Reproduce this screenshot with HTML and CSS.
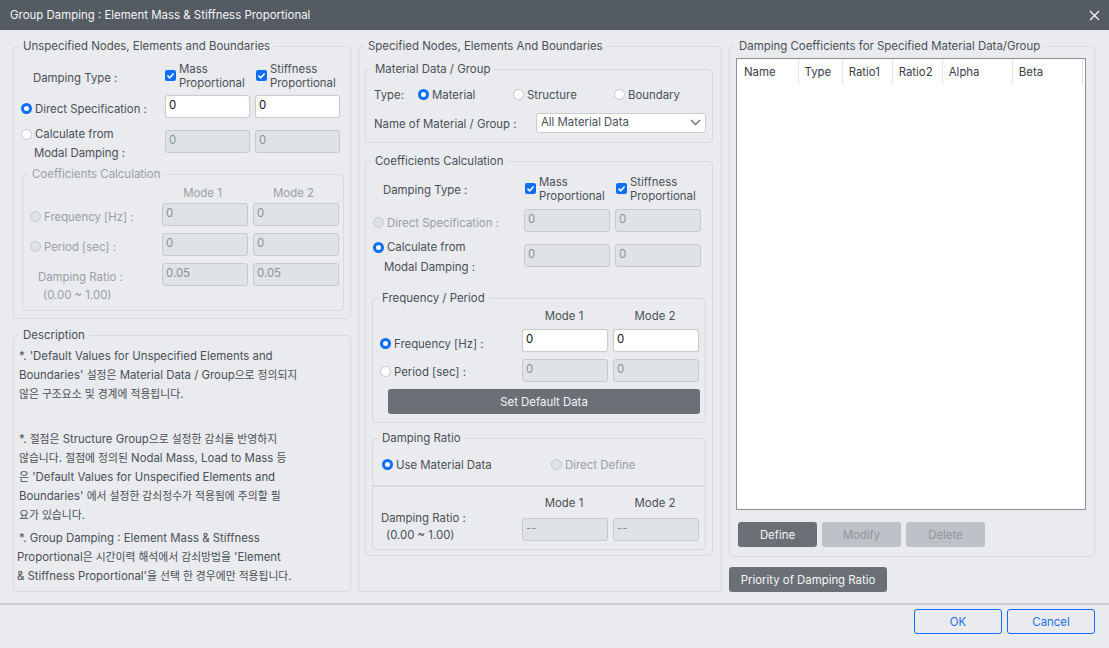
FILE: index.html
```html
<!DOCTYPE html>
<html lang="ko">
<head>
<meta charset="utf-8">
<title>Group Damping</title>
<link rel="stylesheet" href="styles.css">
</head>
<body>
<div class="dialog">
  <header class="titlebar">
    <span>Group Damping : Element Mass &amp; Stiffness Proportional</span>
    <svg class="close" width="11" height="11" viewBox="0 0 11 11"><path d="M1 1l9 9M10 1l-9 9" stroke="#fff" stroke-width="1.2" fill="none"/></svg>
  </header>
  <main class="content">
    <section class="col-left">
      <fieldset class="group unspecified">
        <legend>Unspecified Nodes, Elements and Boundaries</legend>
        <div class="row row-type">
          <div class="type-label">Damping Type :</div>
          <label class="check"><span class="box"><svg width="11" height="11" viewBox="0 0 11 11"><path d="M2.5 5.6l2.2 2.2 3.9-4.4" stroke="#fff" stroke-width="1.5" fill="none"/></svg></span><span>Mass<br>Proportional</span></label>
          <label class="check"><span class="box"><svg width="11" height="11" viewBox="0 0 11 11"><path d="M2.5 5.6l2.2 2.2 3.9-4.4" stroke="#fff" stroke-width="1.5" fill="none"/></svg></span><span>Stiffness<br>Proportional</span></label>
        </div>
        <div class="row row-direct">
          <label class="opt"><input type="radio" name="a" checked>Direct Specification :</label>
          <input class="field" type="text" value="0">
          <input class="field" type="text" value="0">
        </div>
        <div class="row row-calc">
          <div class="two-line"><label class="opt"><input type="radio" name="a">Calculate from</label><div class="second">Modal Damping :</div></div>
          <input class="field" type="text" value="0" disabled>
          <input class="field" type="text" value="0" disabled>
        </div>
        <fieldset class="group inner-coef muted">
          <legend>Coefficients Calculation</legend>
          <div class="nrow modes"><div></div><div>Mode 1</div><div>Mode 2</div></div>
          <div class="nrow fr">
            <label class="opt"><input type="radio" name="b" disabled>Frequency [Hz] :</label>
            <input class="field" type="text" value="0" disabled>
            <input class="field" type="text" value="0" disabled>
          </div>
          <div class="nrow fr">
            <label class="opt"><input type="radio" name="b" disabled>Period [sec] :</label>
            <input class="field" type="text" value="0" disabled>
            <input class="field" type="text" value="0" disabled>
          </div>
          <div class="nrow fr">
            <div class="ratio-label">Damping Ratio :<br><span class="range">(0.00 ~ 1.00)</span></div>
            <input class="field" type="text" value="0.05" disabled>
            <input class="field" type="text" value="0.05" disabled>
          </div>
        </fieldset>
      </fieldset>
      <fieldset class="group description">
        <legend>Description</legend>
        <p class="p1">*. 'Default Values for Unspecified Elements and<br>Boundaries' <span class="ko">설정은</span> Material Data / Group<span class="ko">으로 정의되지</span><br><span class="ko">않은 구조요소 및 경계에 적용됩니다</span>.</p>
        <p class="p2">*. <span class="ko">절점은</span> Structure Group<span class="ko">으로 설정한 감쇠를 반영하지</span><br><span class="ko">않습니다</span>. <span class="ko">절점에 정의된</span> Nodal Mass, Load to Mass <span class="ko">등</span><br><span class="ko">은</span> 'Default Values for Unspecified Elements and<br>Boundaries' <span class="ko">에서 설정한 감쇠정수가 적용됨에 주의할 필</span><br><span class="ko">요가 있습니다</span>.</p>
        <p class="p3"><span class="indent">*. Group Damping : Element Mass &amp; Stiffness</span><br>Proportional<span class="ko">은 시간이력 해석에서 감쇠방법을</span> 'Element<br>&amp; Stiffness Proportional'<span class="ko">을 선택 한 경우에만 적용됩니다</span>.</p>
      </fieldset>
    </section>

    <fieldset class="group col-mid">
      <legend>Specified Nodes, Elements And Boundaries</legend>
      <fieldset class="group material">
        <legend>Material Data / Group</legend>
        <div class="type-row">
          <span class="type-name">Type:</span>
          <label class="opt t1"><input type="radio" name="c" checked>Material</label>
          <label class="opt t2"><input type="radio" name="c">Structure</label>
          <label class="opt t3"><input type="radio" name="c">Boundary</label>
        </div>
        <div class="name-row">
          <span>Name of Material / Group :</span>
          <div class="select"><span>All Material Data</span><svg width="11" height="7" viewBox="0 0 11 7"><path d="M1 1l4.5 4.5L10 1" stroke="#6f757b" stroke-width="1.5" fill="none"/></svg></div>
        </div>
      </fieldset>
      <fieldset class="group coef">
        <legend>Coefficients Calculation</legend>
        <div class="mrow row-type">
          <div class="type-label">Damping Type :</div>
          <label class="check"><span class="box"><svg width="11" height="11" viewBox="0 0 11 11"><path d="M2.5 5.6l2.2 2.2 3.9-4.4" stroke="#fff" stroke-width="1.5" fill="none"/></svg></span><span>Mass<br>Proportional</span></label>
          <label class="check"><span class="box"><svg width="11" height="11" viewBox="0 0 11 11"><path d="M2.5 5.6l2.2 2.2 3.9-4.4" stroke="#fff" stroke-width="1.5" fill="none"/></svg></span><span>Stiffness<br>Proportional</span></label>
        </div>
        <div class="mrow m-direct">
          <label class="opt dim"><input type="radio" name="d" disabled>Direct Specification :</label>
          <input class="field" type="text" value="0" disabled>
          <input class="field" type="text" value="0" disabled>
        </div>
        <div class="mrow m-calc">
          <div class="two-line"><label class="opt"><input type="radio" name="d" checked>Calculate from</label><div class="second">Modal Damping :</div></div>
          <input class="field" type="text" value="0" disabled>
          <input class="field" type="text" value="0" disabled>
        </div>
        <fieldset class="group freq">
          <legend>Frequency / Period</legend>
          <div class="frow modes"><div></div><div>Mode 1</div><div>Mode 2</div></div>
          <div class="frow f1">
            <label class="opt"><input type="radio" name="e" checked>Frequency [Hz] :</label>
            <input class="field" type="text" value="0">
            <input class="field" type="text" value="0">
          </div>
          <div class="frow f2">
            <label class="opt"><input type="radio" name="e">Period [sec] :</label>
            <input class="field" type="text" value="0" disabled>
            <input class="field" type="text" value="0" disabled>
          </div>
          <button class="btn set-default" type="button">Set Default Data</button>
        </fieldset>
        <fieldset class="group ratio">
          <legend>Damping Ratio</legend>
          <div class="ratio-top">
            <label class="opt"><input type="radio" name="f" checked>Use Material Data</label>
            <label class="opt dim"><input type="radio" name="f" disabled>Direct Define</label>
          </div>
          <div class="ratio-bottom">
            <div class="frow modes"><div></div><div>Mode 1</div><div>Mode 2</div></div>
            <div class="frow rr">
              <div class="ratio-label">Damping Ratio :<br><span class="range">(0.00 ~ 1.00)</span></div>
              <input class="field" type="text" value="--" disabled>
              <input class="field" type="text" value="--" disabled>
            </div>
          </div>
        </fieldset>
      </fieldset>
    </fieldset>

    <section class="col-right">
      <fieldset class="group coefficients">
        <legend>Damping Coefficients for Specified Material Data/Group</legend>
        <div class="table-box">
          <table>
            <colgroup><col class="c1"><col class="c2"><col class="c3"><col class="c4"><col class="c5"><col class="c6"></colgroup>
            <thead><tr><th>Name</th><th>Type</th><th>Ratio1</th><th>Ratio2</th><th>Alpha</th><th>Beta</th></tr></thead>
          </table>
        </div>
        <div class="table-actions">
          <button class="btn" type="button">Define</button>
          <button class="btn off" type="button">Modify</button>
          <button class="btn off" type="button">Delete</button>
        </div>
      </fieldset>
      <button class="btn priority" type="button">Priority of Damping Ratio</button>
    </section>
  </main>
  <footer class="footer">
    <button class="btn-line" type="button">OK</button>
    <button class="btn-line" type="button">Cancel</button>
  </footer>
</div>
</body>
</html>
```
FILE: styles.css
```css
* { box-sizing: border-box; }
html, body { margin: 0; height: 100%; }
body { background: #e9ebee; font-family: Inter, "Noto Sans CJK KR", sans-serif; font-size: 11.4px; color: #4b5058; line-height: 14px; overflow: hidden; }
.dialog { width: 1109px; height: 648px; display: flex; flex-direction: column; }

.titlebar { height: 30px; flex: none; background: #555b63; color: #f4f5f6; font-size: 11.45px; display: flex; align-items: center; justify-content: space-between; padding: 0 9px 0 10px; }
.close { display: block; }

.content { height: 573px; flex: none; display: flex; padding-top: 9px; padding-left: 13px; }
.footer { flex: 1; border-top: 2px solid #ccced3; display: flex; justify-content: flex-end; gap: 5px; padding: 4px 14px 0 0; }

fieldset.group { margin: 0; padding: 0; min-width: 0; border: 1px solid #d8dade; border-radius: 4px; }
legend { padding: 0 4px; margin-left: 5px; line-height: 14px; height: 14px; font-size: 11.45px; }

.col-left { width: 338px; flex: none; }
fieldset.unspecified { height: 280px; }
fieldset.description { height: 264px; margin-top: 9px; }
.description p { margin: 0; line-height: 19.2px; font-size: 11.4px; }
.ko { font-size: 10.8px; }
.p1 { padding: 5px 0 0 5px; }
.p2 { padding: 25px 0 0 5px; }
.p3 { padding: 3px 0 0 3px; }
.indent { padding-left: 2px; }

.row { display: grid; grid-template-columns: 146px 85px 85px; column-gap: 5px; }
.row-type { height: 28px; margin-top: 9px; align-items: center; }
.type-label { padding-left: 19px; padding-top: 2px; }
.row .type-label { padding-top: 4px; }
.check { display: flex; align-items: center; white-space: nowrap; gap: 3px; }
.row .check:last-child { padding-left: 1px; }
.mrow .check { padding-left: 1px; }
.box { width: 11px; height: 11px; background: #0d6efd; border-radius: 2px; display: block; flex: none; margin-top: -2px; }
.box svg { display: block; }

.row-direct { margin-top: 5px; height: 23px; }
.row-calc { margin-top: 6px; height: 38px; }
.row-calc .field { margin-top: 6px; }
.opt { display: flex; align-items: center; white-space: nowrap; height: 23px; gap: 3px; }
.row .opt { padding-left: 7px; }
.row-direct .opt, .m-direct .opt, .fr .opt { height: 27px; }
.f1 .opt { height: 29px; }
.f2 .opt { height: 25px; }
.two-line { line-height: 19px; }
.two-line .opt { height: 19px; }
.row .two-line { padding-top: 1px; }
.row .second { padding-left: 20px; }

input[type=radio] { appearance: none; margin: 0; width: 11px; height: 11px; border-radius: 50%; background: #fff; border: 1px solid #c4c7cc; flex: none; }
input[type=radio]:checked { background: #fff; border: 3px solid #0d6efd; }
input[type=radio]:disabled { background: #dfe2e5; border-color: #c6c9cd; }

.field { width: 86px; height: 23px; font: inherit; color: #111; background: #fff; border: 1px solid #c9ccd1; border-radius: 3px; padding: 0 3px 3px; box-shadow: 0 0 1px #c9ccd1; outline: none; }
.field:disabled { background: #e0e3e6; border-color: #c6c9ce; color: #8b9197; box-shadow: none; }
.row .field { width: 85px; }

fieldset.inner-coef { margin: 5px 6px 0 8px; height: 144px; }
.muted, .muted legend { color: #9a9fa5; }
.nrow { display: grid; grid-template-columns: 134px 86px 86px; column-gap: 5px; }
.modes { text-align: center; margin-top: 5px; height: 14px; }
.nrow.modes > div { padding-right: 5px; }
.frow.modes > div { padding-right: 2px; }
.fr { margin-top: 7px; height: 23px; }
.modes + .fr { margin-top: 3px; }
.nrow .opt { padding-left: 7px; }
.ratio-label { line-height: 18px; padding: 5px 0 0 15px; white-space: nowrap; }
.range { padding-left: 5px; }

fieldset.col-mid { width: 364px; flex: none; height: 553px; margin-left: 7px; padding: 0 8px 0 6px; }
.col-mid > legend { margin-left: -1px; }
fieldset.material { height: 81px; margin-top: 9px; }
.type-row { display: flex; align-items: center; height: 23px; margin-top: 7px; padding-left: 8px; }
.type-name { width: 44px; }
.t1 { width: 95px; }
.t2 { width: 101px; }
.name-row { display: flex; align-items: center; justify-content: space-between; height: 20px; margin-top: 7px; padding: 0 6px 0 8px; }
.name-row > span { padding-top: 2px; }
.select { width: 170px; height: 20px; background: #fff; border: 1px solid #c9ccd1; border-radius: 3px; display: flex; align-items: center; justify-content: space-between; padding: 0 4px 2px 4px; }

fieldset.coef { height: 402px; margin-top: 11px; padding: 0 6px; }
.coef > legend { margin-left: -1px; }
.mrow { display: grid; grid-template-columns: 147px 86px 86px; column-gap: 5px; }
.coef .row-type { margin-top: 7px; }
.coef .type-label { padding-left: 11px; }
.m-direct { margin-top: 6px; height: 23px; }
.m-direct .opt, .m-calc .opt { padding-left: 1px; }
.dim { color: #9a9fa5; }
.m-calc { margin-top: 6px; height: 45px; }
.m-calc .two-line { line-height: 20px; }
.m-calc .second { padding-left: 12px; padding-top: 1px; }
.m-calc .field { margin-top: 6px; }
.m-calc .opt { height: 18px; }

fieldset.freq { margin-top: 8px; height: 132px; }
.frow { display: grid; grid-template-columns: 144px 86px 86px; column-gap: 5px; }
.frow .opt { padding-left: 7px; }
.freq .modes { margin-top: 4px; }
.f1 { margin-top: 6px; height: 23px; }
.f2 { margin-top: 7px; height: 23px; }
.btn { height: 25px; border: 0; border-radius: 3px; background: #6a7076; color: #f6f7f8; font: inherit; padding: 0; display: block; }
.set-default { width: 312px; margin: 7px 0 0 15px; }

fieldset.ratio { margin-top: 8px; height: 119px; }
.ratio-top { height: 42px; display: flex; align-items: center; padding: 0 0 1px 9px; border-bottom: 2px solid #d8dade; }
.ratio-top .opt:first-child { width: 169px; }
.ratio-bottom .modes { margin-top: 9px; }
.rr { margin-top: 8px; }
.rr .ratio-label { padding: 0 0 0 8px; margin-top: -8px; line-height: 17px; }

.col-right { width: 366px; flex: none; margin-left: 7px; }
fieldset.coefficients { height: 518px; }
.table-box { margin: 5px 8px 0 6px; height: 452px; background: #fff; border: 1px solid #8d9197; }
table { border-collapse: collapse; table-layout: fixed; width: 346px; }
.c1 { width: 61px; } .c2 { width: 44px; } .c3, .c4 { width: 50px; } .c5 { width: 70px; } .c6 { width: 70px; }
th { font-weight: 400; text-align: left; color: #3c4048; height: 25px; padding: 0 0 0 7px; border-right: 1px solid #e4e5e8; }
th + th { padding-left: 6px; }
.table-actions { display: flex; gap: 5px; margin: 12px 0 0 8px; }
.table-actions .btn { width: 79px; }
.btn.off { background: #bcc2c7; color: #8f959b; }
.priority { width: 158px; margin-top: 10px; }
.btn-line { width: 88px; height: 25px; background: transparent; border: 1px solid #0d6efd; border-radius: 3px; color: #1f6fe8; font: inherit; padding: 0; }
```
